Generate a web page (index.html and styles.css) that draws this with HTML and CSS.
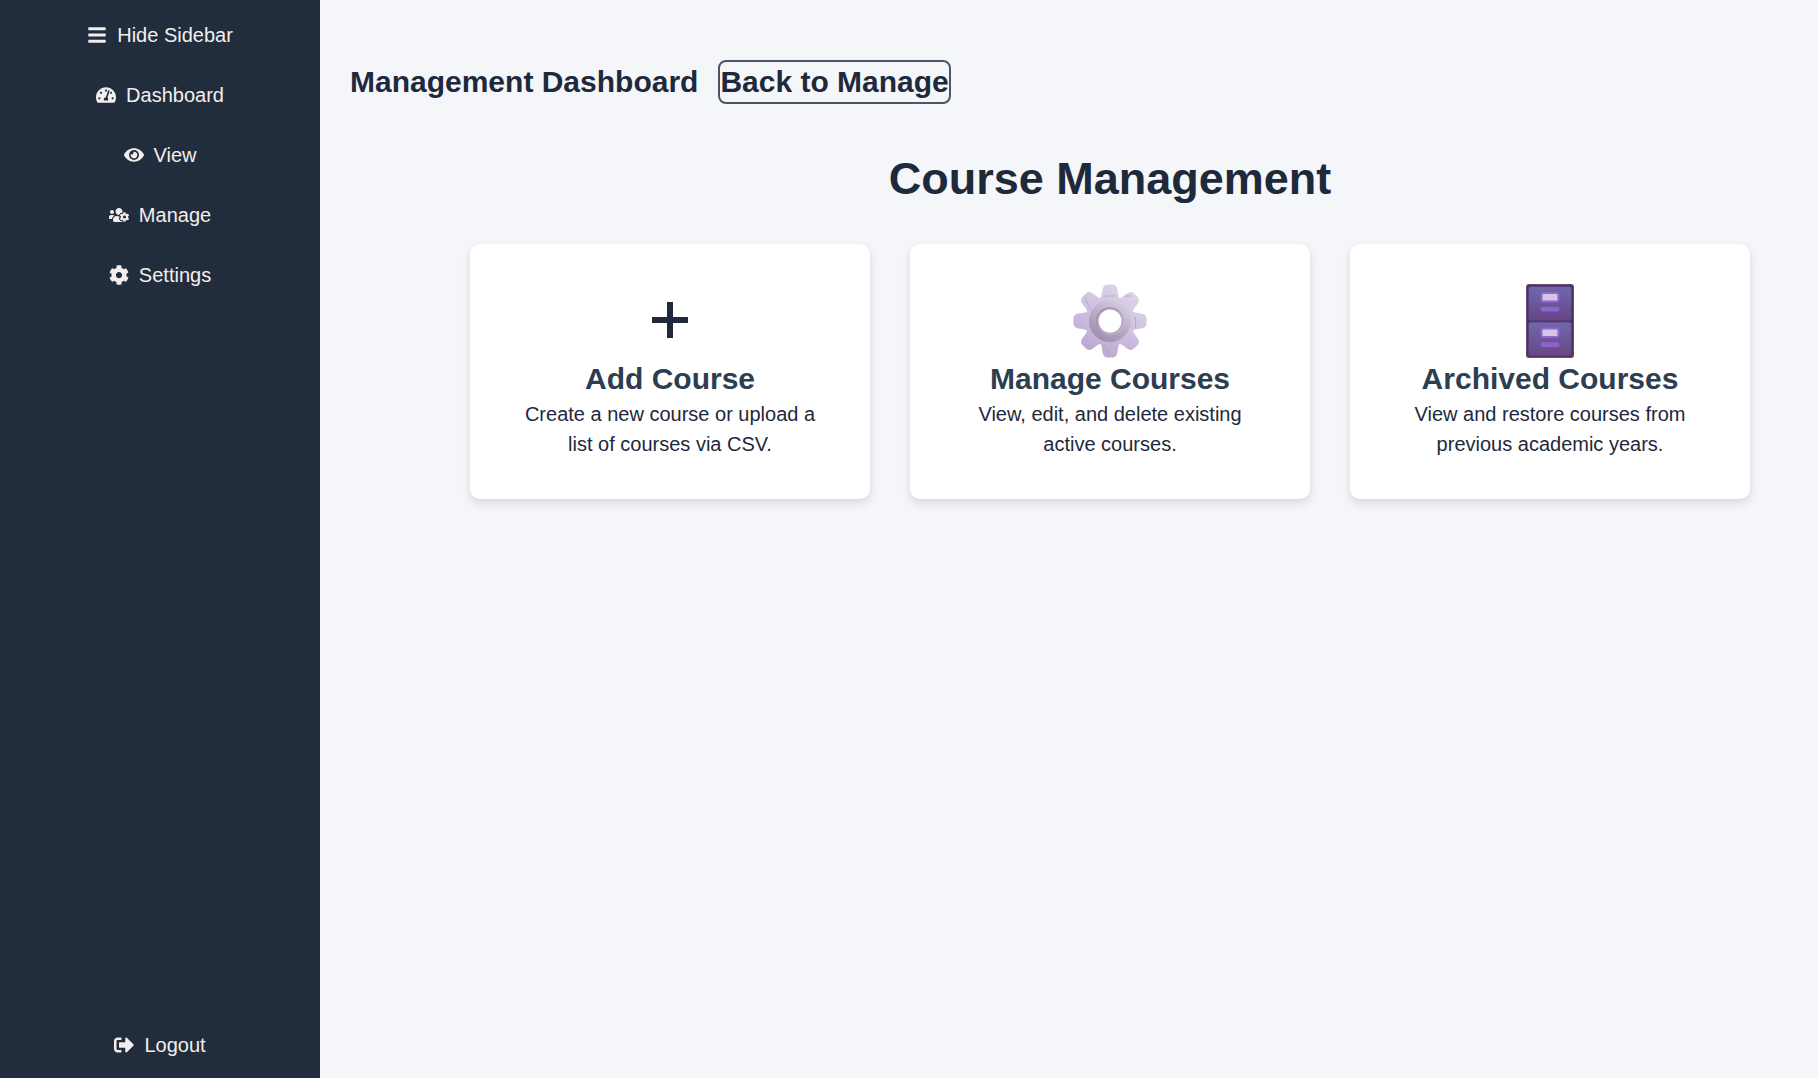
FILE: index.html
```html
<!DOCTYPE html>
<html lang="en">
<head>
<meta charset="utf-8">
<meta name="viewport" content="width=device-width, initial-scale=1">
<title>Course Management</title>
<link rel="stylesheet" href="styles.css">
</head>
<body>
<div class="layout">
  <aside class="sidebar">
    <button type="button" class="nav-item">
      <svg class="nav-icon" viewBox="0 0 448 512" aria-hidden="true"><path d="M16 132h416c8.837 0 16-7.163 16-16V76c0-8.837-7.163-16-16-16H16C7.163 60 0 67.163 0 76v40c0 8.837 7.163 16 16 16zm0 160h416c8.837 0 16-7.163 16-16v-40c0-8.837-7.163-16-16-16H16c-8.837 0-16 7.163-16 16v40c0 8.837 7.163 16 16 16zm0 160h416c8.837 0 16-7.163 16-16v-40c0-8.837-7.163-16-16-16H16c-8.837 0-16 7.163-16 16v40c0 8.837 7.163 16 16 16z"/></svg>
      <span>Hide Sidebar</span>
    </button>
    <nav class="nav">
      <a class="nav-item" href="#dashboard">
        <svg class="nav-icon" viewBox="0 0 576 512" aria-hidden="true"><path d="M288 32C128.94 32 0 160.94 0 320c0 52.8 14.25 102.26 39.06 144.8 5.61 9.62 16.3 15.2 27.44 15.2h443c11.14 0 21.83-5.58 27.44-15.2C561.75 422.26 576 372.8 576 320c0-159.06-128.94-288-288-288zm0 64c14.71 0 26.58 10.13 30.32 23.65-1.11 2.26-2.64 4.23-3.45 6.67l-9.22 27.67c-5.13 3.49-10.97 6.01-17.64 6.01-17.67 0-32-14.33-32-32S270.33 96 288 96zM96 384c-17.67 0-32-14.33-32-32s14.33-32 32-32 32 14.33 32 32-14.33 32-32 32zm48-160c-17.67 0-32-14.33-32-32s14.33-32 32-32 32 14.33 32 32-14.33 32-32 32zm246.77-72.41l-61.33 184C343.13 347.33 352 364.54 352 384c0 11.72-3.38 22.55-8.88 32H232.88c-5.5-9.45-8.88-20.28-8.88-32 0-33.94 26.5-61.43 59.9-63.59l61.34-184.01c4.17-12.56 17.73-19.45 30.36-15.17 12.57 4.19 19.35 17.79 15.17 30.36zm14.66 57.2l15.52-46.55c3.47-1.29 7.13-2.23 11.05-2.23 17.67 0 32 14.33 32 32s-14.33 32-32 32c-11.38-.01-20.89-6.28-26.57-15.22zM480 384c-17.67 0-32-14.33-32-32s14.33-32 32-32 32 14.33 32 32-14.33 32-32 32z"/></svg>
        <span>Dashboard</span>
      </a>
      <a class="nav-item" href="#view">
        <svg class="nav-icon" viewBox="0 0 576 512" aria-hidden="true"><path d="M572.52 241.4C518.29 135.59 410.93 64 288 64S57.68 135.64 3.48 241.41a32.35 32.35 0 0 0 0 29.19C57.71 376.41 165.07 448 288 448s230.32-71.64 284.52-177.41a32.35 32.35 0 0 0 0-29.19zM288 400a144 144 0 1 1 144-144 143.93 143.93 0 0 1-144 144zm0-240a95.31 95.31 0 0 0-25.31 3.79 47.85 47.85 0 0 1-66.9 66.9A95.78 95.78 0 1 0 288 160z"/></svg>
        <span>View</span>
      </a>
      <a class="nav-item" href="#manage">
        <svg class="nav-icon" viewBox="0 0 640 512" aria-hidden="true"><path d="M610.5 341.3c2.6-14.1 2.6-28.5 0-42.6l25.8-14.9c3-1.7 4.3-5.2 3.3-8.5-6.7-21.6-18.2-41.2-33.2-57.4-2.3-2.5-6-3.1-9-1.4l-25.8 14.9c-10.9-9.3-23.4-16.5-36.9-21.3v-29.8c0-3.4-2.4-6.4-5.7-7.1-22.3-5-45-4.8-66.2 0-3.3.7-5.7 3.7-5.7 7.1v29.8c-13.5 4.8-26 12-36.9 21.3l-25.8-14.9c-2.9-1.7-6.7-1.1-9 1.4-15 16.2-26.5 35.8-33.2 57.4-1 3.3.4 6.8 3.3 8.5l25.8 14.9c-2.6 14.1-2.6 28.5 0 42.6l-25.8 14.9c-3 1.7-4.3 5.2-3.3 8.5 6.7 21.6 18.2 41.1 33.2 57.4 2.3 2.5 6 3.1 9 1.4l25.8-14.9c10.9 9.3 23.4 16.5 36.9 21.3v29.8c0 3.4 2.4 6.4 5.7 7.1 22.3 5 45 4.8 66.2 0 3.3-.7 5.7-3.7 5.7-7.1v-29.8c13.5-4.8 26-12 36.9-21.3l25.8 14.9c2.9 1.7 6.7 1.1 9-1.4 15-16.2 26.5-35.8 33.2-57.4 1-3.3-.4-6.8-3.3-8.5l-25.8-14.9zM496 368.5c-26.8 0-48.5-21.8-48.5-48.5s21.8-48.5 48.5-48.5 48.5 21.8 48.5 48.5-21.7 48.5-48.5 48.5zM96 224c35.3 0 64-28.7 64-64s-28.7-64-64-64-64 28.7-64 64 28.7 64 64 64zm224 32c1.9 0 3.7-.5 5.6-.6 8.3-21.7 20.5-42.1 36.3-59.2 7.4-8 17.9-12.6 28.9-12.6 6.9 0 13.7 1.8 19.6 5.3l7.9 4.6c.8-.5 1.6-.9 2.4-1.4 7-14.6 11.2-30.8 11.2-48 0-61.9-50.1-112-112-112S208 82.1 208 144c0 61.9 50.1 112 112 112zm105.2 194.5c-2.3-1.2-4.6-2.6-6.8-3.9-8.2 4.8-15.3 9.8-27.5 9.8-10.9 0-21.4-4.6-28.9-12.6-18.3-19.8-32.3-43.9-40.2-69.6-10.7-34.5 24.9-49.7 25.8-50.3-.1-2.6-.1-5.2 0-7.8l-7.9-4.6c-3.8-2.2-7-5-9.8-8.1-3.3.2-6.5.6-9.8.6-24.6 0-47.6-6-68.5-16h-8.3C179.6 288 128 339.6 128 403.2V432c0 26.5 21.5 48 48 48h255.4c-3.7-6-6.2-12.8-6.2-20.3v-9.2zM173.1 274.6C161.5 263.1 145.6 256 128 256H64c-35.3 0-64 28.7-64 64v32c0 17.7 14.3 32 32 32h65.9c6.3-47.4 34.9-87.3 75.2-109.4z"/></svg>
        <span>Manage</span>
      </a>
      <a class="nav-item" href="#settings">
        <svg class="nav-icon" viewBox="0 0 512 512" aria-hidden="true"><path d="M487.4 315.7l-42.6-24.6c4.3-23.2 4.3-47 0-70.2l42.6-24.6c4.9-2.8 7.1-8.6 5.5-14-11.1-35.6-30-67.8-54.7-94.6-3.8-4.1-10-5.1-14.8-2.3L380.8 110c-17.9-15.4-38.5-27.3-60.8-35.1V25.8c0-5.6-3.9-10.5-9.4-11.7-36.7-8.2-74.3-7.8-109.2 0-5.5 1.2-9.4 6.1-9.4 11.7V75c-22.2 7.9-42.8 19.8-60.8 35.1L88.7 85.5c-4.9-2.8-11-1.9-14.8 2.3-24.7 26.7-43.6 58.9-54.7 94.6-1.7 5.4.6 11.2 5.5 14L67.3 221c-4.3 23.2-4.3 47 0 70.2l-42.6 24.6c-4.9 2.8-7.1 8.6-5.5 14 11.1 35.6 30 67.8 54.7 94.6 3.8 4.1 10 5.1 14.8 2.3l42.6-24.6c17.9 15.4 38.5 27.3 60.8 35.1v49.2c0 5.6 3.9 10.5 9.4 11.7 36.7 8.2 74.3 7.8 109.2 0 5.5-1.2 9.4-6.1 9.4-11.7v-49.2c22.2-7.9 42.8-19.8 60.8-35.1l42.6 24.6c4.9 2.8 11 1.9 14.8-2.3 24.7-26.7 43.6-58.9 54.7-94.6 1.5-5.5-.7-11.3-5.6-14.1zM256 336c-44.1 0-80-35.9-80-80s35.9-80 80-80 80 35.9 80 80-35.9 80-80 80z"/></svg>
        <span>Settings</span>
      </a>
    </nav>
    <button type="button" class="nav-item logout">
      <svg class="nav-icon" viewBox="0 0 512 512" aria-hidden="true"><path d="M497 273L329 441c-15 15-41 4.500-41-17v-96H152c-13.300 0-24-10.700-24-24v-96c0-13.300 10.700-24 24-24h136V88c0-21.400 25.900-32 41-17l168 168c9.300 9.400 9.300 24.600 0 34zM192 436v-40c0-6.600-5.400-12-12-12H96c-17.700 0-32-14.300-32-32V160c0-17.700 14.300-32 32-32h84c6.600 0 12-5.400 12-12V76c0-6.600-5.400-12-12-12H96c-53 0-96 43-96 96v192c0 53 43 96 96 96h84c6.600 0 12-5.400 12-12z"/></svg>
      <span>Logout</span>
    </button>
  </aside>

  <main class="content">
    <header class="page-header">
      <h2 class="page-name">Management Dashboard</h2>
      <button type="button" class="back-button">Back to Manage</button>
    </header>

    <section class="courses">
      <h1 class="title">Course Management</h1>
      <div class="cards">
        <a class="card" href="#add-course">
          <svg class="card-icon" viewBox="-38 -37 76 74" aria-hidden="true">
            <path d="M-18-1H18M0-19V17" stroke="#1e293b" stroke-width="6"/>
          </svg>
          <h3 class="card-title">Add Course</h3>
          <p class="card-text">Create a new course or upload a list of courses via CSV.</p>
        </a>

        <a class="card" href="#manage-courses">
          <svg class="card-icon" viewBox="-38 -37 76 74" aria-hidden="true">
            <defs>
              <linearGradient id="gear-body" x1="0.8" y1="0.1" x2="0.3" y2="1">
                <stop offset="0" stop-color="#dcd4e8"/>
                <stop offset="0.5" stop-color="#cdc0e0"/>
                <stop offset="1" stop-color="#baa5d0"/>
              </linearGradient>
              <linearGradient id="gear-ring" x1="0.75" y1="0.1" x2="0.25" y2="0.9">
                <stop offset="0" stop-color="#d3cadf"/>
                <stop offset="0.5" stop-color="#b9adc7"/>
                <stop offset="1" stop-color="#9f90b1"/>
              </linearGradient>
              <linearGradient id="gear-bore" x1="0.1" y1="0.2" x2="0.9" y2="0.8">
                <stop offset="0" stop-color="#9c8eac"/>
                <stop offset="1" stop-color="#c3b8d0"/>
              </linearGradient>
              <path id="tooth" d="M-12-20C-7-24-8.400-29-7.200-32.500Q-6-36.500-2.500-36.500H2.500Q6-36.500 7.200-32.500C8.400-29 7-24 12-20Z"/>
              <mask id="gear-shape" maskUnits="userSpaceOnUse" x="-40" y="-40" width="80" height="80">
                <g fill="#fff">
                  <circle r="23.500"/>
                  <use href="#tooth"/>
                  <use href="#tooth" transform="rotate(45)"/>
                  <use href="#tooth" transform="rotate(90)"/>
                  <use href="#tooth" transform="rotate(135)"/>
                  <use href="#tooth" transform="rotate(180)"/>
                  <use href="#tooth" transform="rotate(225)"/>
                  <use href="#tooth" transform="rotate(270)"/>
                  <use href="#tooth" transform="rotate(315)"/>
                </g>
                <circle r="11.500" fill="#000"/>
              </mask>
            </defs>
            <g mask="url(#gear-shape)">
              <rect x="-37" y="-37" width="74" height="74" fill="url(#gear-body)"/>
              <path d="M-25-24L-18-8M-5 23L0 36M25.500-4V7M-6-25H6M13-25H22" fill="none" stroke="#b29cca" stroke-width="0.700"/>
              <circle r="21" fill="url(#gear-ring)"/>
              <circle r="14" fill="url(#gear-bore)"/>
              <circle r="12.500" fill="none" stroke="#b0a4be" stroke-width="1"/>
            </g>
          </svg>
          <h3 class="card-title">Manage Courses</h3>
          <p class="card-text">View, edit, and delete existing active courses.</p>
        </a>

        <a class="card" href="#archived-courses">
          <svg class="card-icon" viewBox="-38 -37 76 74" aria-hidden="true">
            <defs>
              <linearGradient id="drawer" x1="0" y1="0" x2="0" y2="1">
                <stop offset="0" stop-color="#6f68ab"/>
                <stop offset="0.500" stop-color="#6a5799"/>
                <stop offset="1" stop-color="#684585"/>
              </linearGradient>
              <g id="drawer-front">
                <rect x="-21.500" y="0" width="43" height="34" rx="2.500" fill="url(#drawer)" stroke="#5c3b7c" stroke-width="0.800"/>
                <rect x="-8.500" y="6.500" width="17" height="8.500" rx="2" fill="#d5c6e6" stroke="#9465d0" stroke-width="2"/>
                <rect x="-9.500" y="20.300" width="19" height="4.600" rx="2" fill="#8f62cd"/>
              </g>
            </defs>
            <rect x="-24" y="-37" width="48" height="74" rx="3.500" fill="#493459"/>
            <rect x="-23.500" y="-36.500" width="47" height="73" rx="3" fill="none" stroke="#67507a"/>
            <use href="#drawer-front" y="-34.500"/>
            <use href="#drawer-front" y="1"/>
          </svg>
          <h3 class="card-title">Archived Courses</h3>
          <p class="card-text">View and restore courses from previous academic years.</p>
        </a>
      </div>
    </section>
  </main>
</div>
</body>
</html>
```
FILE: styles.css
```css
* {
  box-sizing: border-box;
  margin: 0;
}

body {
  background: #f4f6fa;
  color: #1e293b;
  font-family: "Liberation Sans", Arial, sans-serif;
  font-size: 20px;
  line-height: 30px;
}

.layout {
  display: flex;
  min-height: 100vh;
}

.sidebar {
  display: flex;
  flex: 0 0 320px;
  flex-direction: column;
  gap: 10px;
  padding: 10px 20px 8px;
  background: #212d3c;
}

.nav {
  display: flex;
  flex-direction: column;
  gap: 10px;
}

.nav-item {
  display: flex;
  align-items: center;
  justify-content: center;
  gap: 10px;
  padding: 10px;
  border: 0;
  background: none;
  color: #f4eded;
  font: inherit;
  text-decoration: none;
  cursor: pointer;
}

.nav-icon {
  width: 20px;
  height: 20px;
  fill: currentColor;
}

.logout {
  margin-top: auto;
}

.content {
  flex: 1;
  min-width: 0;
  padding: 60px 30px;
}

.page-header {
  display: flex;
  align-items: center;
  gap: 20px;
}

.page-name {
  font-size: 30px;
  line-height: 40px;
}

.back-button {
  padding: 0;
  border: 2px solid #4a5568;
  border-radius: 8px;
  background: none;
  color: inherit;
  font: inherit;
  font-size: 30px;
  font-weight: bold;
  line-height: 40px;
  cursor: pointer;
}

.courses {
  padding: 48px 38px 0 120px;
}

.title {
  margin-bottom: 38px;
  font-size: 45px;
  line-height: 54px;
  text-align: center;
}

.cards {
  display: grid;
  grid-template-columns: repeat(3, 1fr);
  gap: 40px;
}

.card {
  display: flex;
  flex-direction: column;
  align-items: center;
  padding: 40px;
  border-radius: 10px;
  background: #fff;
  box-shadow: 0 4px 10px rgba(0, 0, 0, 0.12);
  color: inherit;
  text-align: center;
  text-decoration: none;
}

.card-icon {
  width: 76px;
  height: 74px;
  overflow: visible;
}

.card-title {
  color: #2c3e50;
  font-size: 30px;
  line-height: 41px;
}
```
